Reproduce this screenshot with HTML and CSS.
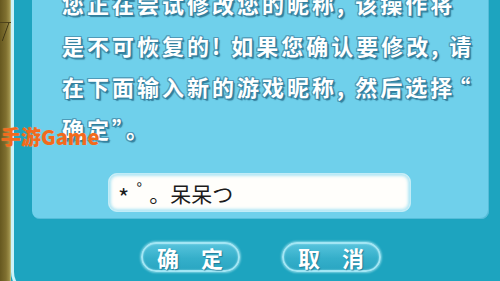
FILE: index.html
```html
<!DOCTYPE html>
<html lang="zh">
<head>
<meta charset="utf-8">
<title>修改昵称</title>
<link rel="stylesheet" href="styles.css">
</head>
<body>
<div class="screen">
  <div class="backdrop">
    <span class="crack"></span>
  </div>
  <div class="window">
    <div class="panel">
      <div class="message">
        <div class="line">您正在尝试修改您的昵称, 该操作将</div>
        <div class="line">是不可恢复的! 如果您确认要修改, 请</div>
        <div class="line">在下面输入新的游戏昵称, 然后选<span class="tight">择</span>“</div>
        <div class="line">确定”。</div>
      </div>
      <div class="field"><span class="star">*</span><span class="deg">°</span>。呆呆つ</div>
    </div>
    <div class="actions">
      <div class="btn"><span>确</span><span>定</span></div>
      <div class="btn"><span>取</span><span>消</span></div>
    </div>
  </div>
  <div class="watermark">手游Game</div>
</div>
</body>
</html>
```

FILE: styles.css
```css
html, body {
  margin: 0;
  padding: 0;
}
body {
  width: 500px;
  height: 281px;
  overflow: hidden;
  background: #1da4bf;
  font-family: "Noto Sans CJK SC", "Noto Sans", sans-serif;
}
.screen {
  position: relative;
  display: flex;
  width: 500px;
  height: 281px;
  overflow: hidden;
}
.backdrop {
  position: relative;
  flex: 0 0 11px;
  height: 281px;
  background: linear-gradient(90deg, #66581f 0%, #7f7030 55%, #9c8e48 85%, #c4c690 100%);
}
.crack {
  position: absolute;
  left: 0;
  top: 22px;
  width: 11px;
  height: 18px;
  border-top: 1px solid #4d421a;
  background: linear-gradient(110deg, transparent 45%, #3f3615 50%, transparent 56%);
}
.window {
  flex: 1;
  min-height: 294px;
  box-sizing: border-box;
  background: #1da4bf;
  border-left: 3px solid #cbf3fa;
  border-bottom: 3px solid #cbf3fa;
  border-bottom-left-radius: 22px;
  padding: 0 11px 0 18px;
}
.panel {
  background: #6fd0eb;
  border-radius: 0 0 8px 8px;
  padding: 0 0 7px 0;
  box-shadow: inset -1px -1px 0 rgba(60, 170, 200, 0.5);
}
.message {
  margin-top: -17px;
  padding-left: 30px;
  color: #ffffff;
  font-size: 22px;
  font-weight: 700;
  line-height: 41.5px;
  letter-spacing: 3px;
  white-space: nowrap;
  text-shadow:
    1px 1px 0 #2f7f9e,
    -1px -1px 0 #4f9ab8,
    1px -1px 0 #4f9ab8,
    -1px 1px 0 #4f9ab8,
    -1px 0 0 #4a96b4,
    0 -1px 0 #4a96b4,
    1px 0 0 #3d8aa9,
    0 1px 0 #3d8aa9,
    2px 2px 1px rgba(25, 90, 120, 0.7);
}
.tight {
  letter-spacing: -4px;
}
.line {
  height: 41.5px;
}
.field {
  margin: 24px 0 0 76px;
  width: 303px;
  height: 39px;
  box-sizing: border-box;
  background: #fffefb;
  border: 1px solid #c2ecf7;
  border-radius: 9px;
  box-shadow: inset 0 0 3px 2px rgba(150, 222, 242, 0.75);
  padding-left: 9px;
  display: flex;
  align-items: center;
  font-size: 21px;
  color: #1b1b1b;
  white-space: nowrap;
}
.star {
  font-size: 24px;
  font-weight: 400;
  line-height: 1;
  transform: translateY(4px);
}
.deg {
  display: inline-block;
  width: 20px;
  text-align: center;
  font-size: 15px;
  transform: translateY(-5px);
}
.actions {
  display: flex;
  justify-content: center;
  gap: 42px;
  margin-top: 23px;
}
.btn {
  width: 99px;
  height: 30px;
  box-sizing: border-box;
  border: 2px solid #a3e6f4;
  border-radius: 15px;
  background: linear-gradient(180deg, #56c3dc 0%, #35afca 55%, #2aa6c2 100%);
  box-shadow: 0 0 2px 1px rgba(190, 240, 250, 0.55), inset 0 0 2px rgba(200, 245, 255, 0.6);
  display: flex;
  align-items: center;
  justify-content: center;
  gap: 22px;
  color: #ffffff;
  font-size: 22px;
  font-weight: 700;
  line-height: 1;
  text-shadow: 1px 1px 1px rgba(30, 110, 140, 0.8);
}
.watermark {
  position: absolute;
  left: 1px;
  top: 124px;
  color: #f26a1c;
  font-family: "Noto Sans CJK SC", "Noto Sans", sans-serif;
  font-size: 20px;
  font-weight: 900;
  line-height: 25px;
  white-space: nowrap;
  text-shadow: 0 0 1px rgba(255, 200, 150, 0.6);
}
```
